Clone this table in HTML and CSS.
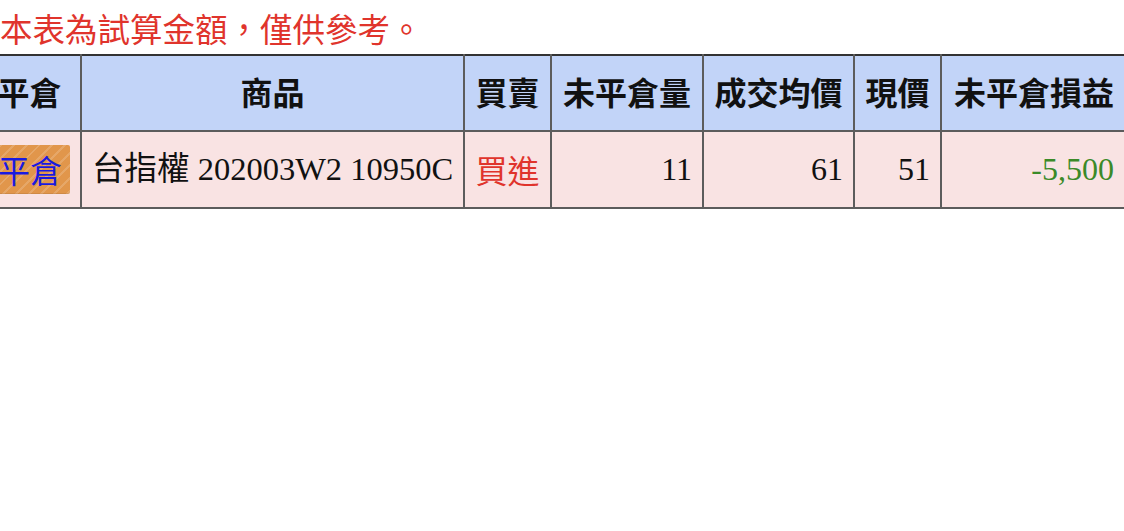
FILE: index.html
```html
<!DOCTYPE html>
<html lang="zh-Hant">
<head>
<meta charset="utf-8">
<link rel="stylesheet" href="styles.css">
</head>
<body>
<div class="page">
  <p class="note">本表為試算金額，僅供參考。</p>
  <table class="grid">
    <thead>
      <tr>
        <th class="c-act">平倉</th>
        <th class="c-prod">商品</th>
        <th class="c-side">買賣</th>
        <th class="c-qty">未平倉量</th>
        <th class="c-avg">成交均價</th>
        <th class="c-now">現價</th>
        <th class="c-pl">未平倉損益</th>
      </tr>
    </thead>
    <tbody>
      <tr>
        <td class="c-act"><span class="btn">平倉</span></td>
        <td class="c-prod">台指權 202003W2 10950C</td>
        <td class="c-side buy">買進</td>
        <td class="num">11</td>
        <td class="num">61</td>
        <td class="num">51</td>
        <td class="num loss">-5,500</td>
      </tr>
    </tbody>
  </table>
</div>
</body>
</html>
```

FILE: styles.css
```css
html, body {
  margin: 0;
  padding: 0;
  background: #ffffff;
  overflow: hidden;
}

.page {
  font-family: "Liberation Serif", "Noto Sans CJK TC", serif;
  font-size: 32px;
  color: #111;
}

.note {
  margin: 0;
  padding: 5px 0 0 0;
  height: 54px;
  line-height: 46px;
  font-family: "Noto Sans CJK TC", sans-serif;
  font-size: 32.5px;
  color: #e0342c;
  box-sizing: border-box;
}

.grid {
  border-collapse: collapse;
  table-layout: fixed;
  margin-left: -23px;
  width: 1149px;
}

.grid th,
.grid td {
  box-sizing: border-box;
  border: 2px solid #5c5c5c;
  padding: 0 10px;
  white-space: nowrap;
  overflow: hidden;
}

.grid th {
  height: 76px;
  padding-bottom: 5px;
  background: #c2d4f8;
  font-family: "Noto Sans CJK TC", sans-serif;
  font-weight: 700;
  text-align: center;
  color: #111;
  line-height: 40px;
  border-top-color: #333;
}

.grid td {
  height: 77px;
  padding-bottom: 2px;
  background: #f9e3e3;
  line-height: 40px;
  text-align: left;
}

.c-act { width: 103px; }
.c-prod { width: 383px; }
.c-side { width: 87px; }
.c-qty { width: 152px; }
.c-avg { width: 151px; }
.c-now { width: 87px; }
.c-pl { width: 186px; }

.grid td.c-act {
  padding: 0 10px;
  text-align: right;
}

.btn {
  display: inline-block;
  padding: 3px 8px 4px;
  line-height: 42px;
  border-radius: 2px;
  color: #1a1ae0;
  font-family: "Noto Sans CJK TC", sans-serif;
  background-color: #e1964b;
  background-image: repeating-linear-gradient(135deg, rgba(255,255,255,0) 0 7px, rgba(255,255,255,0.16) 7px 9px);
  box-shadow: inset 0 -1px 0 rgba(0,0,0,0.08);
  vertical-align: middle;
}

.grid td.c-prod {
  padding-left: 10px;
  font-size: 32.5px;
}

.grid td.buy {
  color: #e0342c;
  text-align: center;
  font-family: "Noto Sans CJK TC", sans-serif;
  padding: 0 4px 2px;
}

.grid td.num {
  text-align: right;
}

.grid td.loss {
  color: #3b8a28;
  padding-right: 12px;
}
```
